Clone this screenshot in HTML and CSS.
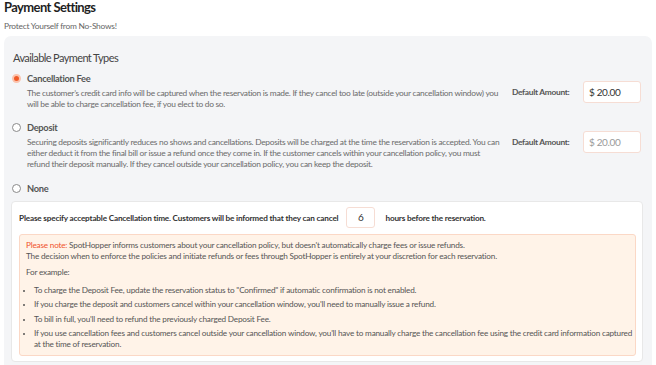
FILE: index.html
```html
<!DOCTYPE html>
<html lang="en">
<head>
<meta charset="utf-8">
<title>Payment Settings</title>
<link rel="stylesheet" href="styles.css">
</head>
<body>
<div class="page">
  <h1 class="title">Payment Settings</h1>
  <p class="subtitle">Protect Yourself from No-Shows!</p>
  <section class="panel">
    <h2 class="panel-title">Available Payment Types</h2>

    <div class="option first">
      <div class="option-main">
        <div class="radio-row"><span class="radio checked"></span><span class="option-name">Cancellation Fee</span></div>
        <p class="option-desc">The customer’s credit card info will be captured when the reservation is made. If they cancel too late (outside your cancellation window) you will be able to charge cancellation fee, if you elect to do so.</p>
      </div>
      <div class="amount">
        <span class="amount-label">Default Amount:</span>
        <div class="amount-input">$ 20.00</div>
      </div>
    </div>

    <div class="option">
      <div class="option-main">
        <div class="radio-row"><span class="radio"></span><span class="option-name">Deposit</span></div>
        <p class="option-desc">Securing deposits significantly reduces no shows and cancellations. Deposits will be charged at the time the reservation is accepted. You can either deduct it from the final bill or issue a refund once they come in. If the customer cancels within your cancellation policy, you must refund their deposit manually. If they cancel outside your cancellation policy, you can keep the deposit.</p>
      </div>
      <div class="amount">
        <span class="amount-label">Default Amount:</span>
        <div class="amount-input placeholder">$ 20.00</div>
      </div>
    </div>

    <div class="option">
      <div class="radio-row"><span class="radio"></span><span class="option-name">None</span></div>
    </div>

    <div class="card">
      <div class="cancel-row">
        <span>Please specify acceptable Cancellation time. Customers will be informed that they can cancel</span>
        <span class="hours-input">6</span>
        <span>hours before the reservation.</span>
      </div>
      <div class="note">
        <p class="note-lead"><span class="note-label">Please note:</span> SpotHopper informs customers about your cancellation policy, but doesn't automatically charge fees or issue refunds.<br>The decision when to enforce the policies and initiate refunds or fees through SpotHopper is entirely at your discretion for each reservation.</p>
        <p class="note-example">For example:</p>
        <ul class="note-list">
          <li>To charge the Deposit Fee, update the reservation status to "Confirmed" if automatic confirmation is not enabled.</li>
          <li>If you charge the deposit and customers cancel within your cancellation window, you'll need to manually issue a refund.</li>
          <li>To bill in full, you'll need to refund the previously charged Deposit Fee.</li>
          <li>If you use cancellation fees and customers cancel outside your cancellation window, you'll have to manually charge the cancellation fee using the credit card information captured at the time of reservation.</li>
        </ul>
      </div>
    </div>
  </section>
</div>
</body>
</html>
```

FILE: styles.css
```css
* { box-sizing: border-box; }
html, body { margin: 0; padding: 0; background: #ffffff; }
body {
  font-family: Lato, "Open Sans", "Liberation Sans", sans-serif;
  color: #333;
}
.page { padding: 0 4px; }
.title {
  margin: 0;
  font-size: 13px;
  line-height: 14px;
  font-weight: 700;
  letter-spacing: -0.6px;
  color: #1f1f1f;
}
.subtitle {
  margin: 5px 0 0;
  font-size: 8.4px;
  line-height: 14px;
  letter-spacing: -0.25px;
  color: #666;
}
.panel {
  margin-top: 3px;
  background: #f4f5f7;
  border-radius: 7px;
  padding: 13px 9px 0 7px;
  height: 340px;
}
.panel-title {
  margin: 0 0 0 2px;
  font-size: 11px;
  line-height: 17px;
  font-weight: 400;
  letter-spacing: -0.6px;
  color: #444;
}
.option {
  display: flex;
  align-items: flex-start;
  margin-top: 11px;
}
.option.first { margin-top: 5px; }
.option-main { flex: 1; }
.radio-row {
  display: flex;
  align-items: center;
  height: 14px;
}
.radio {
  width: 9px;
  height: 9px;
  border-radius: 50%;
  border: 1px solid #8a8a8a;
  background: #fff;
  margin: 0 6px 0 1px;
  flex: none;
}
.radio.checked {
  border: 2px solid #fbc3ad;
  background: #f05a28;
}
.option-name {
  font-size: 9.3px;
  font-weight: 700;
  letter-spacing: -0.3px;
  color: #555;
}
.option-desc {
  margin: 2.5px 0 0 16px;
  max-width: 476px;
  font-size: 8.4px;
  line-height: 11px;
  letter-spacing: -0.28px;
  color: #6b6b6b;
}
.amount {
  display: flex;
  align-items: center;
  margin: 10px 2px 0 0;
  flex: none;
}
.amount-label {
  font-size: 8.4px;
  font-weight: 700;
  letter-spacing: -0.3px;
  color: #555;
  width: 71px;
  white-space: nowrap;
}
.amount-input {
  width: 58px;
  height: 22px;
  border: 1px solid #f6ddd4;
  border-radius: 3px;
  background: #fff;
  padding: 0 5px;
  font-size: 10px;
  letter-spacing: -0.35px;
  line-height: 20px;
  color: #333;
}
.amount-input.placeholder { color: #9a9a9a; }
.card {
  margin-top: 6px;
  background: #fff;
  border: 1px solid #e8e8e8;
  border-radius: 4px;
  padding: 5px 6px 5px 7px;
}
.cancel-row {
  display: flex;
  align-items: center;
  font-size: 8.2px;
  font-weight: 700;
  letter-spacing: -0.18px;
  color: #333;
}
.hours-input {
  width: 29px;
  height: 21px;
  margin: 0 10px 0 8px;
  border: 1px solid #f6ddd4;
  border-radius: 3px;
  text-align: center;
  font-size: 10px;
  font-weight: 400;
  letter-spacing: 0;
  line-height: 19px;
  color: #333;
}
.note {
  margin-top: 6px;
  background: #fff3e8;
  border: 1px solid #fbd8c6;
  border-radius: 3px;
  padding: 4.5px 2px 4.5px 6px;
  font-size: 8.2px;
  letter-spacing: -0.2px;
  color: #555;
}
.note p { margin: 0; line-height: 11px; }
.note-label { color: #f0542d; }
.note-example { margin-top: 5px !important; }
.note-list {
  margin: 7px 0 0;
  padding-left: 8px;
}
.note-list li {
  line-height: 11px;
  margin-bottom: 3.6px;
}
.note-list li::marker { font-size: 7px; }
.note-list li:last-child { margin-bottom: 0; }
```
